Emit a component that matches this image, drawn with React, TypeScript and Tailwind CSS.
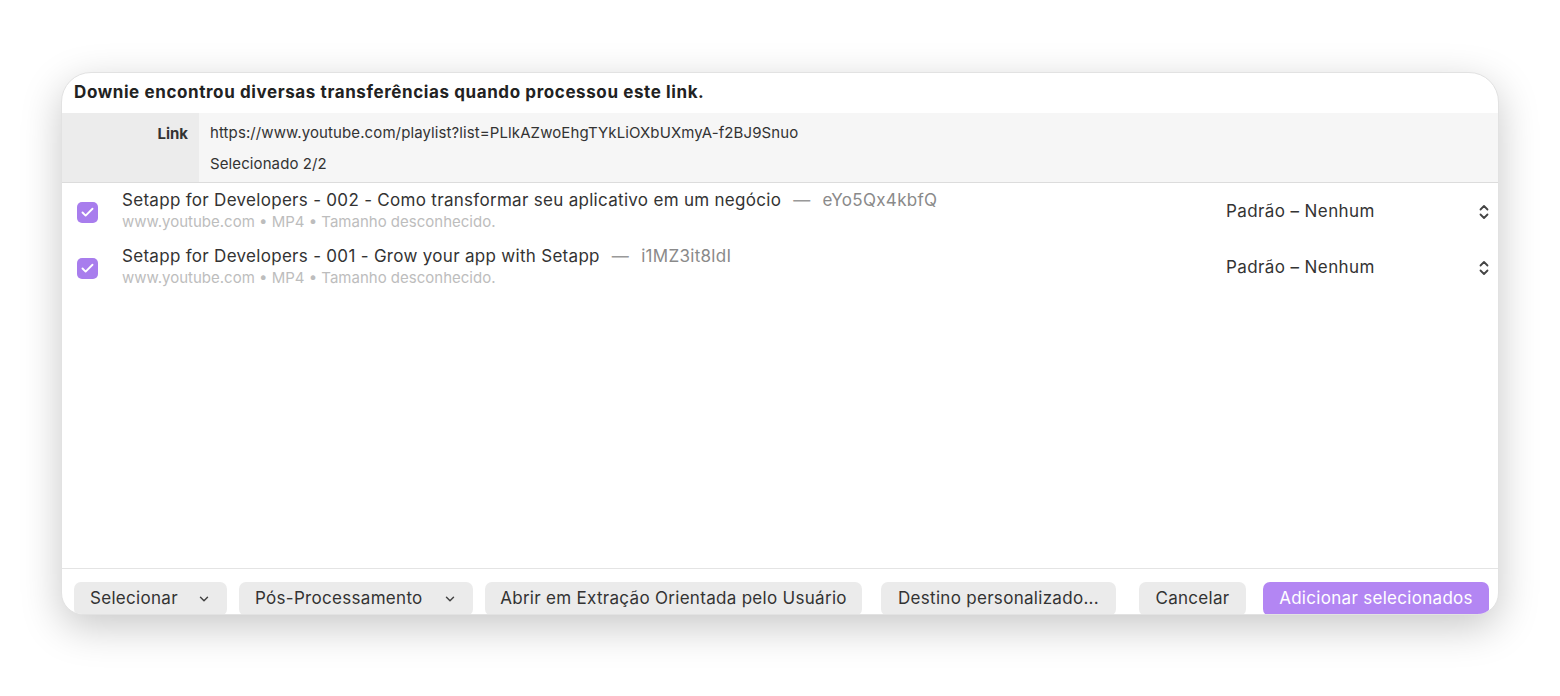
import { Check, ChevronDown } from "lucide-react";

const items = [
  {
    title: "Setapp for Developers - 002 - Como transformar seu aplicativo em um negócio",
    id: "eYo5Qx4kbfQ",
  },
  {
    title: "Setapp for Developers - 001 - Grow your app with Setapp",
    id: "i1MZ3it8ldI",
  },
];

const UpDown = () => (
  <svg width="10" height="16" viewBox="0 0 10 16" fill="none" stroke="#444" strokeWidth="1.8" strokeLinecap="round" strokeLinejoin="round">
    <path d="M1.5 5.5 L5 2 L8.5 5.5" />
    <path d="M1.5 10.5 L5 14 L8.5 10.5" />
  </svg>
);

const Row = ({ title, id }: { title: string; id: string }) => (
  <div className="flex items-center h-[56px] pl-[15px] pr-[9px]">
    <div className="w-[21px] h-[21px] rounded-[5px] bg-[#a87ded] flex items-center justify-center flex-shrink-0">
      <Check size={15} strokeWidth={3} color="white" />
    </div>
    <div className="ml-[24px] flex-1 flex flex-col">
      <div className="text-[17px] tracking-[0.3px] leading-[20px] text-[#333]">
        {title}
        <span className="text-[#999] ml-3">—</span>
        <span className="text-[#8a8a8a] ml-3">{id}</span>
      </div>
      <div className="text-[15px] leading-[24px] text-[#bdbdbd]">
        www.youtube.com • MP4 • Tamanho desconhecido.
      </div>
    </div>
    <div className="w-[263px] flex items-center justify-between text-[17px] tracking-[0.4px] text-[#333]">
      <span>Padrão – Nenhum</span>
      <UpDown />
    </div>
  </div>
);

const Btn = ({ label, w, menu }: { label: string; w: string; menu?: boolean }) => (
  <div className={`${w} h-[34px] flex-shrink-0 rounded-[7px] bg-[#ebebeb] flex items-center whitespace-nowrap text-[17px] tracking-[0.3px] text-[#333] ${menu ? "justify-between px-4" : "justify-center px-2"}`}>
    <span>{label}</span>
    {menu && <ChevronDown size={14} strokeWidth={2.5} color="#444" />}
  </div>
);

export default function App() {
  return (
    <div className="w-[1560px] h-[696px] bg-white pt-[72px] pl-[61px]" style={{ fontFamily: "Inter, 'Noto Sans', sans-serif" }}>
      <div className="w-[1438px] h-[543px] bg-white rounded-t-[30px] rounded-b-[22px] border border-[#e2e2e2] overflow-hidden flex flex-col shadow-[0_12px_40px_rgba(0,0,0,0.22)]">
        <div className="h-[40px] flex items-center pl-[12px] pb-[1px] text-[17px] tracking-[0.6px] font-bold text-[#222]">
          Downie encontrou diversas transferências quando processou este link.
        </div>
        <div className="flex h-[70px] bg-[#f6f6f6] border-b border-[#dcdcdc]">
          <div className="w-[137px] bg-[#ececec] flex justify-end pr-[11px] pt-[10px] text-[15px] font-bold text-[#333]">
            Link
          </div>
          <div className="flex flex-col pl-[11px] pt-[10px] gap-[11px] text-[15px] tracking-[0.1px] text-[#333]">
            <span className="leading-[20px]">https://www.youtube.com/playlist?list=PLlkAZwoEhgTYkLiOXbUXmyA-f2BJ9Snuo</span>
            <span className="leading-[20px]">Selecionado 2/2</span>
          </div>
        </div>
        <div className="flex-1 flex flex-col pt-[1px]">
          {items.map((it) => (
            <Row key={it.id} {...it} />
          ))}
        </div>
        <div className="h-[46px] flex-shrink-0 border-t border-[#e4e4e4] pt-[13px] pl-[12px] flex items-start gap-0">
          <Btn label="Selecionar" w="w-[153px]" menu />
          <div className="w-[12px] flex-shrink-0" />
          <Btn label="Pós-Processamento" w="w-[234px]" menu />
          <div className="w-[12px] flex-shrink-0" />
          <Btn label="Abrir em Extração Orientada pelo Usuário" w="w-[377px]" />
          <div className="w-[19px] flex-shrink-0" />
          <Btn label="Destino personalizado..." w="w-[235px]" />
          <div className="w-[23px] flex-shrink-0" />
          <Btn label="Cancelar" w="w-[107px]" />
          <div className="w-[17px] flex-shrink-0" />
          <div className="w-[226px] h-[34px] flex-shrink-0 rounded-[7px] bg-[#b386f3] flex items-center justify-center whitespace-nowrap text-[17px] tracking-[0.3px] text-white">
            Adicionar selecionados
          </div>
        </div>
      </div>
    </div>
  );
}
